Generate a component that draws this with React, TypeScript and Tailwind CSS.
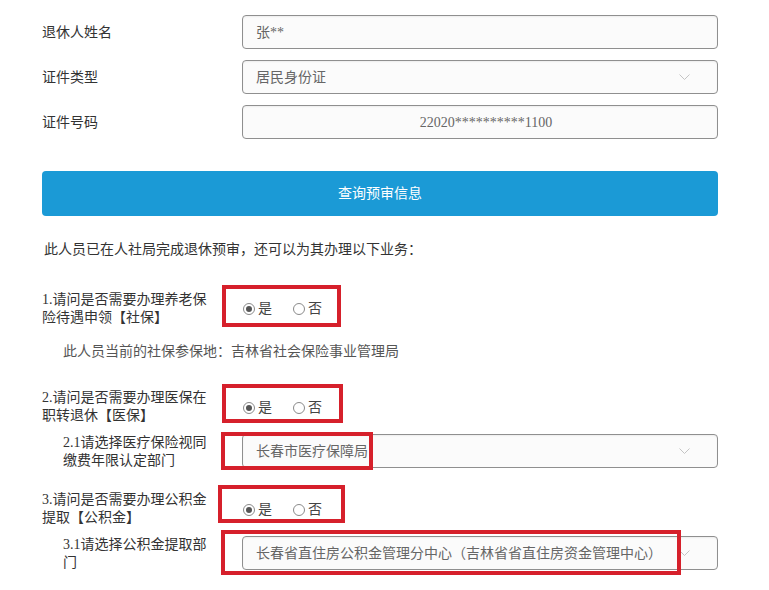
import React from "react";

// Retirement pre-review query form with annotated (red-boxed) answers

const FONT = "font-['Liberation_Serif','Noto_Sans_CJK_SC',sans-serif]";

function Chevron() {
  return (
    <svg width="11" height="7" viewBox="0 0 11 7" className="shrink-0">
      <polyline points="0.5,0.5 5.5,5.5 10.5,0.5" fill="none" stroke="#c4c4c4" strokeWidth="1" />
    </svg>
  );
}

function Radio({ checked, label }: { checked?: boolean; label: string }) {
  return (
    <span className="flex items-center gap-[3px]">
      <span className="w-[12px] h-[12px] rounded-full border border-[#8a8a8a] bg-white flex items-center justify-center">
        {checked && <span className="w-[6px] h-[6px] rounded-full bg-[#555]" />}
      </span>
      <span className="text-[#444] leading-[18px]">{label}</span>
    </span>
  );
}

function YesNo() {
  return (
    <div className="flex items-center gap-[21px]">
      <Radio checked label="是" />
      <Radio label="否" />
    </div>
  );
}

function Field({ label, children }: { label: string; children: React.ReactNode }) {
  return (
    <div className="flex items-center h-[34px]">
      <div className="w-[200px] text-[#333]">{label}</div>
      {children}
    </div>
  );
}

function Box({ children, center, select }: { children?: React.ReactNode; center?: boolean; select?: boolean }) {
  return (
    <div
      className={`flex-1 h-[34px] border border-[#8f8f8f] rounded-[4px] bg-[#fbfbfb] shadow-[inset_0_1px_2px_rgba(0,0,0,0.06)] flex items-center text-[#666] ${
        center ? "justify-center" : "pl-[13px]"
      } ${select ? "pr-[27px]" : ""}`}
    >
      <span className="flex-1">{children}</span>
      {select && <Chevron />}
    </div>
  );
}

export default function App() {
  return (
    <div className={`w-[769px] h-[590px] bg-white overflow-hidden text-[14px] ${FONT}`}>
      <div className="ml-[42px] w-[676px] pt-[15px]">
        {/* Basic info */}
        <div className="flex flex-col gap-[11px]">
          <Field label="退休人姓名">
            <Box>张**</Box>
          </Field>
          <Field label="证件类型">
            <Box select>居民身份证</Box>
          </Field>
          <Field label="证件号码">
            <div className="flex-1 h-[34px] border border-[#8f8f8f] rounded-[4px] bg-[#fbfbfb] shadow-[inset_0_1px_2px_rgba(0,0,0,0.06)] flex items-center justify-center text-[#666] pl-[12px]">
              22020**********1100
            </div>
          </Field>
        </div>

        <button className="mt-[32px] w-full h-[45px] rounded-[4px] bg-[#1b9ad6] text-white text-[14px]">
          查询预审信息
        </button>

        <p className="mt-[24px] pl-[2px] leading-[20px] text-[#333]">
          此人员已在人社局完成退休预审，还可以为其办理以下业务：
        </p>

        {/* 1 */}
        <div className="mt-[25px] flex items-start">
          <div className="w-[170px] mr-[10px] mt-[6px] leading-[18px] text-[#333]">1.请问是否需要办理养老保险待遇申领【社保】</div>
          <div className="w-[119px] h-[42px] border-4 border-[#d6202b] flex items-center pl-[17px] pt-[6px]">
            <YesNo />
          </div>
        </div>

        <p className="mt-[15px] pl-[21px] leading-[20px] text-[#555]">
          此人员当前的社保参保地：吉林省社会保险事业管理局
        </p>

        {/* 2 */}
        <div className="mt-[22px] flex items-start">
          <div className="w-[170px] mr-[10px] mt-[5px] leading-[18px] text-[#333]">2.请问是否需要办理医保在职转退休【医保】</div>
          <div className="w-[121px] h-[39px] border-4 border-[#d6202b] flex items-center pl-[17px] pt-[9px]">
            <YesNo />
          </div>
        </div>

        <div className="mt-[9px] flex items-start">
          <div className="w-[180px] pl-[21px] pr-[8px] leading-[18px] text-[#333]">2.1请选择医疗保险视同缴费年限认定部门</div>
          <div className="relative flex-1 pl-[20px] flex">
            <Box select>长春市医疗保障局</Box>
            <div className="absolute left-[-1px] top-[-2px] w-[152px] h-[38px] border-4 border-[#d6202b]" />
          </div>
        </div>

        {/* 3 */}
        <div className="mt-[15px] flex items-start">
          <div className="w-[170px] mr-[6px] mt-[6px] leading-[18px] text-[#333]">3.请问是否需要办理公积金提取【公积金】</div>
          <div className="w-[127px] h-[38px] border-4 border-[#d6202b] flex items-center pl-[21px] pt-[12px]">
            <YesNo />
          </div>
        </div>

        <div className="mt-[9px] flex items-start">
          <div className="w-[180px] pl-[21px] pr-[8px] leading-[18px] text-[#333]">3.1请选择公积金提取部门</div>
          <div className="relative flex-1 pl-[20px] flex">
            <Box select>长春省直住房公积金管理分中心（吉林省省直住房资金管理中心）</Box>
            <div className="absolute left-[-1px] top-[-6px] w-[460px] h-[45px] border-4 border-[#d6202b]" />
          </div>
        </div>
      </div>
    </div>
  );
}
